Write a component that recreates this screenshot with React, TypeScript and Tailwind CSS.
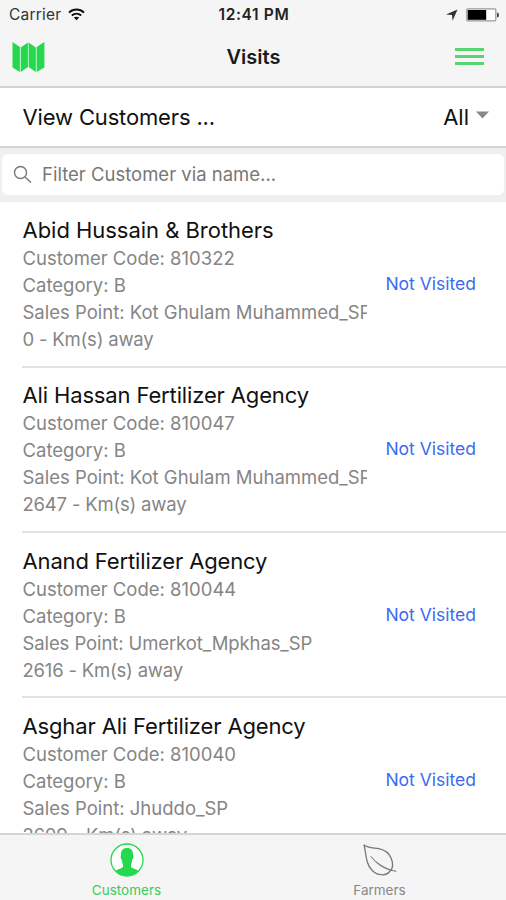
type Customer = { name: string; code: string; category: string; point: string; km: string; track: string };

const customers: Customer[] = [
  { name: 'Abid Hussain & Brothers', code: '810322', category: 'B', point: 'Kot Ghulam Muhammed_SP', km: '0', track: 'tracking-[-0.03px]' },
  { name: 'Ali Hassan Fertilizer Agency', code: '810047', category: 'B', point: 'Kot Ghulam Muhammed_SP', km: '2647', track: 'tracking-[-0.14px]' },
  { name: 'Anand Fertilizer Agency', code: '810044', category: 'B', point: 'Umerkot_Mpkhas_SP', km: '2616', track: 'tracking-[-0.14px]' },
  { name: 'Asghar Ali Fertilizer Agency', code: '810040', category: 'B', point: 'Jhuddo_SP', km: '2609', track: 'tracking-[-0.14px]' },
];

function StatusBar() {
  return (
    <div className="grid h-7 grid-cols-3 items-center pl-[9px] pr-[7px] pt-px text-[15.5px]">
      <div className="flex items-center gap-[7px] text-[#333]">
        <span className="tracking-[0.2px]">Carrier</span>
        <svg width="17" height="13" viewBox="0 0 17 13" fill="none" stroke="#111" strokeWidth="2">
          <path d="M1 4.6C5.2.6 11.8.6 16 4.6" />
          <path d="M3.8 7.5c2.8-2.5 6.6-2.5 9.4 0" />
          <path d="M8.5 12.2 5.8 9.6c1.5-1.3 3.9-1.3 5.4 0Z" fill="#111" stroke="none" />
        </svg>
      </div>
      <div className="whitespace-nowrap text-center text-[15.5px] font-semibold tracking-[0.65px] text-[#222]">12:41 PM</div>
      <div className="flex items-center justify-end gap-2">
        <svg width="12" height="12" viewBox="0 0 12 12" fill="#333">
          <path d="M11.5.5 6.6 11.8 6 6 0 5.4Z" />
        </svg>
        <svg width="33" height="14" viewBox="0 0 33 14">
          <rect x=".8" y=".8" width="29" height="12" rx="1" fill="#fff" stroke="#999" strokeWidth="1.2" />
          <rect x="1.7" y="2" width="18.5" height="9.8" fill="#000" />
          <path d="M31 4.5q2 0 2 2.5t-2 2.5Z" fill="#444" />
        </svg>
      </div>
    </div>
  );
}

function NavBar() {
  return (
    <div className="flex h-[58px] items-center justify-between pl-3 pr-[22px]">
      <svg width="33" height="32" viewBox="0 0 33 32" fill="#24d94d">
        <path d="M.5 1l7.400 5v25L.5 26.500ZM8.700 6.500 15.900 1.500v24.500L8.700 31ZM16.600 1.500 23.800 6.500V31L16.600 26ZM24.600 6 32.400 1v25.500L24.600 31Z" />
      </svg>
      <h1 className="pl-[7px] text-[20px] font-semibold text-[#1a1a1a]">Visits</h1>
      <div className="flex w-[29px] flex-col gap-1 pb-0.5">
        <span className="h-[3px] bg-[#57d571]" />
        <span className="h-[3px] bg-[#57d571]" />
        <span className="h-[3px] bg-[#57d571]" />
      </div>
    </div>
  );
}

function CustomerRow({ c }: { c: Customer }) {
  return (
    <li className="ml-[22px] flex h-[165.33px] shrink-0 items-center border-b-2 border-[#e2e2e4] pr-[30px]">
      <div className="w-[345px] shrink-0 overflow-hidden whitespace-nowrap pl-[0.5px]">
        <h2 className={`text-[22px] leading-[30px] text-[#111] ${c.track}`}>{c.name}</h2>
        <div className="text-[18.5px] leading-[27px] text-[#858585]">
          <p>Customer Code: {c.code}</p>
          <p>Category: {c.category}</p>
          <p className={c.point.startsWith('Umerkot') ? 'tracking-[-0.1px]' : ''}>Sales Point: {c.point}</p>
          <p className="tracking-[-0.2px]">{c.km} - Km(s) away</p>
        </div>
      </div>
      <span className="ml-auto whitespace-nowrap text-[17.5px] text-[#3b6cf0]">Not Visited</span>
    </li>
  );
}

export default function App() {
  return (
    <div className="flex h-[900px] w-[506px] flex-col overflow-hidden bg-white font-['Inter',sans-serif]">
      <header className="h-[88px] shrink-0 border-b-2 border-[#d2d2d2] bg-[#f5f5f5]">
        <StatusBar />
        <NavBar />
      </header>
      <div className="flex h-[60px] shrink-0 items-center justify-between border-b-2 border-[#d5d5d5] pl-[22.5px] pr-[17px] text-[22px] text-[#111]">
        <span className="tracking-[-0.15px]">View Customers ...</span>
        <div className="flex items-center gap-[7px]">
          <span>All</span>
          <svg width="13" height="8" viewBox="0 0 13 8" className="mb-1">
            <path d="M0 .5h13L6.5 7.5Z" fill="#888" />
          </svg>
        </div>
      </div>
      <div className="h-[54px] shrink-0 bg-[#efefef] px-0.5 pt-1.5">
        <div className="flex h-[41px] items-center gap-2.5 rounded-[6px] bg-white pl-[11px] text-[18.5px] text-[#777]">
          <svg width="19" height="19" viewBox="0 0 19 19" fill="none" stroke="#777" strokeWidth="1.4" className="shrink-0">
            <circle cx="7.5" cy="7.5" r="6" />
            <path d="m12 12 6 5.5" />
          </svg>
          <span>Filter Customer via name...</span>
        </div>
      </div>
      <ul className="flex min-h-0 flex-1 flex-col overflow-hidden pt-[0.4px]">
        {customers.map((c) => (
          <CustomerRow key={c.code} c={c} />
        ))}
      </ul>
      <nav className="grid h-[67px] shrink-0 grid-cols-2 border-t-2 border-[#d5d5d5] bg-[#f5f5f5] text-[13.5px] leading-[18px]">
        <div className="flex flex-col items-center pt-2 text-[#3ccb5c]">
          <svg width="34" height="34" viewBox="0 0 34 34">
            <circle cx="17" cy="17" r="16" fill="#fff" stroke="#24d94d" strokeWidth="1.3" />
            <path d="M17 5c4.6 0 6.400 3 6 7.500.7 1 .1 3.500-.8 4.500-.2 2-.6 3.200-1.200 4.200v2.500c1.300 2 5.100 2.100 7.600 4.200A16 16 0 0 1 5.400 27.900c2.500-2.100 6.300-2.200 7.600-4.200v-2.500c-.6-1-1-2.200-1.200-4.200-.9-1-1.500-3.500-.8-4.500C10.600 8 12.400 5 17 5Z" fill="#24d94d" />
          </svg>
          <span className="mt-1">Customers</span>
        </div>
        <div className="flex flex-col items-center pt-2 text-[#888]">
          <svg width="34" height="34" viewBox="0 0 34 34" fill="none" stroke="#777" strokeWidth="1.3" strokeLinecap="round" strokeLinejoin="round">
            <path d="M1 2C5 5 10 4.700 15.800 5.700C22 7 26.500 11 28.200 15.300C30 20 30 25 27.500 27.500C25 31 21 32 18.500 31.700C11 31.500 6 25 4.300 19C2.500 13 2.500 7 1 2Z" />
            <path d="M8 13.500C13 19.500 21 25.500 33.300 28.300C22 27 14 22 8 13.500Z" fill="#777" strokeWidth=".6" />
          </svg>
          <span className="mt-1">Farmers</span>
        </div>
      </nav>
    </div>
  );
}
